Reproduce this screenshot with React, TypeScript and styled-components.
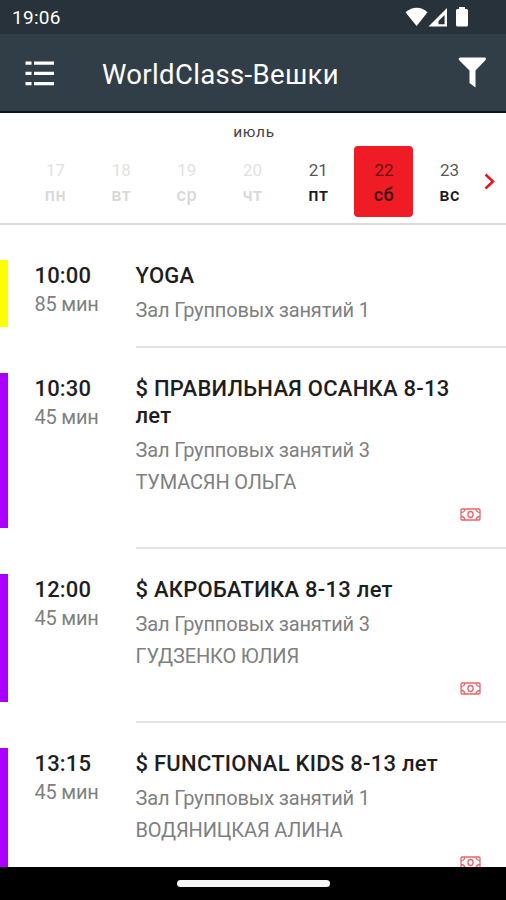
import React from "react";
import styled, { createGlobalStyle } from "styled-components";

const GlobalStyle = createGlobalStyle`
  * { box-sizing: border-box; }
  body { margin: 0; background: #fff; font-family: Roboto, "Noto Sans", sans-serif; }
`;

const Screen = styled.div`
  display: flex;
  flex-direction: column;
  width: 506px;
  height: 900px;
  overflow: hidden;
  background: #fff;
`;

const StatusBar = styled.div`
  flex: none;
  display: flex;
  align-items: center;
  justify-content: space-between;
  height: 34px;
  padding: 2px 36px 0 12px;
  background: #28323a;
  color: #fff;
`;

const Clock = styled.span`
  font-size: 19px;
  line-height: 22px;
  letter-spacing: 0.3px;
`;

const StatusIcons = styled.div`
  display: flex;
  align-items: center;
  height: 20px;
  margin-top: -2px;
`;

const AppBar = styled.header`
  flex: none;
  display: flex;
  align-items: center;
  height: 79px;
  padding: 0 20px 0 25px;
  border-bottom: 2px solid #0c141a;
  background: #323e47;
  color: #fff;
`;

const Heading = styled.h1`
  flex: 1;
  margin: 4px 0 0 47px;
  font-size: 27.5px;
  line-height: 34px;
  font-weight: 400;
  letter-spacing: 0.35px;
`;

const Calendar = styled.section`
  flex: none;
  height: 112px;
  border-bottom: 2px solid #dcdcdc;
`;

const Month = styled.div`
  height: 33px;
  padding: 10px 0 0 2px;
  text-align: center;
  font-size: 15.5px;
  line-height: 18px;
  letter-spacing: 0.7px;
  color: #444;
`;

const Days = styled.div`
  display: flex;
  align-items: center;
  padding-left: 26px;
`;

const Day = styled.div<{ $state: "past" | "open" | "selected" }>`
  display: flex;
  flex-direction: column;
  align-items: center;
  flex: none;
  width: 59px;
  height: 71px;
  margin-right: 6.7px;
  padding-top: 12.5px;
  border-radius: 4px;
  background: ${(p) => (p.$state === "selected" ? "#ef1b25" : "transparent")};
  color: ${(p) => (p.$state === "past" ? "#d8d8d8" : p.$state === "selected" ? "#3d0b0d" : "#1c1c1c")};
`;

const DayNumber = styled.span`
  font-size: 17px;
  line-height: 22px;
  font-weight: 400;
  opacity: 0.75;
`;

const DayName = styled.span`
  margin-top: 3px;
  font-size: 18px;
  line-height: 22px;
  font-weight: 500;
  letter-spacing: 0.5px;
`;

const NextIcon = styled.svg`
  flex: none;
  width: 12px;
  height: 17px;
  margin-left: -2px;
`;

const List = styled.main`
  flex: 1;
  min-height: 0;
  overflow: hidden;
  padding-top: 10px;
`;

const Row = styled.article<{ $height: number }>`
  display: flex;
  height: ${(p) => p.$height}px;
`;

const Stripe = styled.div<{ $color: string }>`
  flex: none;
  width: 7.5px;
  margin: 25px 0 21px;
  background: ${(p) => p.$color};
`;

const TimeColumn = styled.div`
  flex: none;
  width: 101px;
  margin-left: 27px;
  padding-top: 27px;
`;

const Time = styled.div`
  font-size: 22px;
  line-height: 27px;
  font-weight: 500;
  letter-spacing: 0.15px;
  color: #1e1e1e;
`;

const Duration = styled.div`
  margin-top: 1px;
  font-size: 20px;
  line-height: 28px;
  font-weight: 400;
  letter-spacing: -0.2px;
  color: #808080;
`;

const Details = styled.div`
  flex: 1;
  display: flex;
  flex-direction: column;
  padding: 27px 0 0;
  border-bottom: 2px solid #e2e2e2;
`;

const Title = styled.h2`
  max-width: 340px;
  margin: 0 0 5px;
  font-size: 22px;
  line-height: 27px;
  font-weight: 500;
  letter-spacing: 0.26px;
  color: #1e1e1e;
`;

const Info = styled.div`
  font-size: 20px;
  line-height: 32px;
  font-weight: 400;
  letter-spacing: -0.15px;
  color: #808080;
`;

const MoneyIcon = styled.svg`
  flex: none;
  width: 21px;
  height: 13px;
  margin: 10px 25px 0 auto;
`;

const NavBar = styled.footer`
  flex: none;
  display: flex;
  justify-content: center;
  height: 33px;
  padding-top: 13px;
  background: #000;
`;

const HomeHandle = styled.div`
  width: 153px;
  height: 7px;
  border-radius: 4px;
  background: #f5f5f5;
`;

type Lesson = {
  time: string;
  duration: string;
  title: string;
  room: string;
  trainer?: string;
  color: string;
  height: number;
};

const days = [
  ["17", "пн"], ["18", "вт"], ["19", "ср"], ["20", "чт"], ["21", "пт"], ["22", "сб"], ["23", "вс"],
];

const lessons: Lesson[] = [
  { time: "10:00", duration: "85 мин", title: "YOGA", room: "Зал Групповых занятий 1", color: "#ffff00", height: 113 },
  { time: "10:30", duration: "45 мин", title: "$ ПРАВИЛЬНАЯ ОСАНКА 8-13 лет", room: "Зал Групповых занятий 3", trainer: "ТУМАСЯН ОЛЬГА", color: "#aa00ff", height: 201 },
  { time: "12:00", duration: "45 мин", title: "$ АКРОБАТИКА 8-13 лет", room: "Зал Групповых занятий 3", trainer: "ГУДЗЕНКО ЮЛИЯ", color: "#aa00ff", height: 174 },
  { time: "13:15", duration: "45 мин", title: "$ FUNCTIONAL KIDS 8-13 лет", room: "Зал Групповых занятий 1", trainer: "ВОДЯНИЦКАЯ АЛИНА", color: "#aa00ff", height: 174 },
];

const dayState = (n: string) => (n === "22" ? "selected" : Number(n) < 21 ? "past" : "open");

export default function App() {
  return (
    <>
      <GlobalStyle />
      <Screen>
        <StatusBar>
          <Clock>19:06</Clock>
          <StatusIcons>
            <svg width="65" height="22" viewBox="405 6 65 22" fill="#fff">
              <path d="M405.5 12.2Q417 3.4 427.5 12.2L416.6 26Z" />
              <path fillRule="evenodd" d="M447 8V26.6H428.5ZM444.6 15L438.5 21V24.3H444.6Z" />
              <path d="M459 7h6v2h1.500q1.500 0 1.500 1.500V25q0 1.500-1.500 1.500h-9q-1.500 0-1.500-1.500V10.500q0-1.500 1.500-1.500h1.500z" />
            </svg>
          </StatusIcons>
        </StatusBar>
        <AppBar>
          <svg width="30" height="26" viewBox="25 60 30 26" fill="#fff">
            <path d="M25.500 61.500h6v3.300h-6zM34 61.500h20v3.300H34zM25.500 71.700h6V75h-6zM34 71.700h20V75H34zM25.500 81.900h6v3.300h-6zM34 81.900h20v3.300H34z" />
          </svg>
          <Heading>WorldClass-Вешки</Heading>
          <svg width="28" height="31" viewBox="458 58 28 31" fill="#fff">
            <path d="M460 58.500h25q1.500.8.600 2.500L475.500 71.500V88.500L469.500 84V71.500L459 61Q458 59.300 460 58.500Z" />
          </svg>
        </AppBar>
        <Calendar>
          <Month>июль</Month>
          <Days>
            {days.map(([n, d]) => (
              <Day key={n} $state={dayState(n)}>
                <DayNumber>{n}</DayNumber>
                <DayName>{d}</DayName>
              </Day>
            ))}
            <NextIcon viewBox="0 0 12 17" fill="none" stroke="#e3141c" strokeWidth="2.500">
              <path d="M1.500 1.500 9 8.500 1.500 15.500" />
            </NextIcon>
          </Days>
        </Calendar>
        <List>
          {lessons.map((l) => (
            <Row key={l.time} $height={l.height}>
              <Stripe $color={l.color} />
              <TimeColumn>
                <Time>{l.time}</Time>
                <Duration>{l.duration}</Duration>
              </TimeColumn>
              <Details>
                <Title>{l.title}</Title>
                <Info>{l.room}</Info>
                {l.trainer && <Info>{l.trainer}</Info>}
                {l.trainer && (
                  <MoneyIcon viewBox="0 0 21 13" fill="none" stroke="#ea6468" strokeWidth="1.300">
                    <rect x="1" y="1" width="19" height="11" rx="1" />
                    <path d="M1 4.500Q4.500 4.500 5 1M16 1Q16.500 4.500 20 4.500M1 8.500Q4.500 8.500 5 12M16 12Q16.500 8.500 20 8.500" />
                    <ellipse cx="10.500" cy="6.500" rx="2.600" ry="3" />
                  </MoneyIcon>
                )}
              </Details>
            </Row>
          ))}
        </List>
        <NavBar>
          <HomeHandle />
        </NavBar>
      </Screen>
    </>
  );
}
